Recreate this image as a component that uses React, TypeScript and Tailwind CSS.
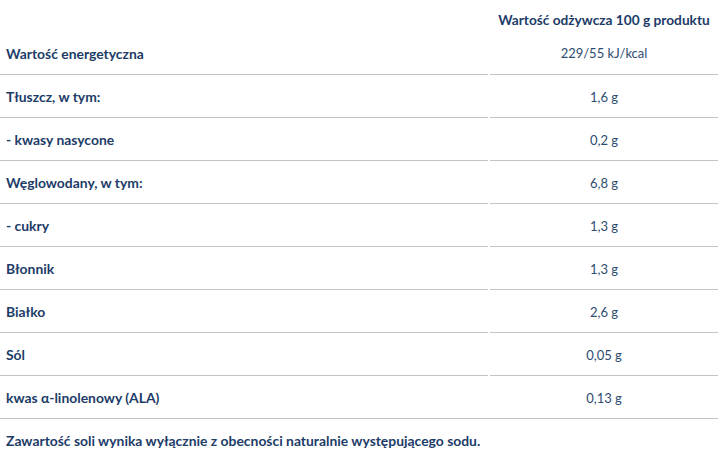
import React from 'react';

const rows: [string, string][] = [
  ['Wartość energetyczna', '229/55 kJ/kcal'],
  ['Tłuszcz, w tym:', '1,6 g'],
  ['- kwasy nasycone', '0,2 g'],
  ['Węglowodany, w tym:', '6,8 g'],
  ['- cukry', '1,3 g'],
  ['Błonnik', '1,3 g'],
  ['Białko', '2,6 g'],
  ['Sól', '0,05 g'],
  ['kwas α-linolenowy (ALA)', '0,13 g'],
];

const App = () => {
  return (
    <div className="w-[718px] h-[465px] bg-white overflow-hidden font-['Lato','Open_Sans',sans-serif] text-[13px]">
      <div className="grid grid-cols-[488px_1fr] gap-x-[2px]">
        <div className="h-[31px]" />
        <div className="h-[31px] pt-[12px] leading-4 text-center font-bold text-[13.7px] text-[#1d3c68]">
          Wartość odżywcza 100 g produktu
        </div>

        {rows.map(([label, value], i) => (
          <React.Fragment key={i}>
            <div
              className={`h-[43px] flex items-center pl-[6px] pt-[3px] font-bold text-[13.9px] text-[#1d3c68] ${
                i === 0 ? '' : 'border-t border-[#c4c4c4]'
              }`}
            >
              {label}
            </div>
            <div
              className={`h-[43px] flex items-center justify-center pt-[3px] text-[#2e4b70] ${
                i === 0 ? '' : 'border-t border-[#c4c4c4]'
              }`}
            >
              {value}
            </div>
          </React.Fragment>
        ))}

        <div className="col-span-2 h-[43px] flex items-center pl-[6px] pt-[3px] font-bold text-[13.9px] text-[#1d3c68] border-t border-[#c4c4c4]">
          <span>Zawartość soli wynika wyłącznie z obecności naturalnie występującego sodu.</span>
        </div>
      </div>
    </div>
  );
};

export default App;
